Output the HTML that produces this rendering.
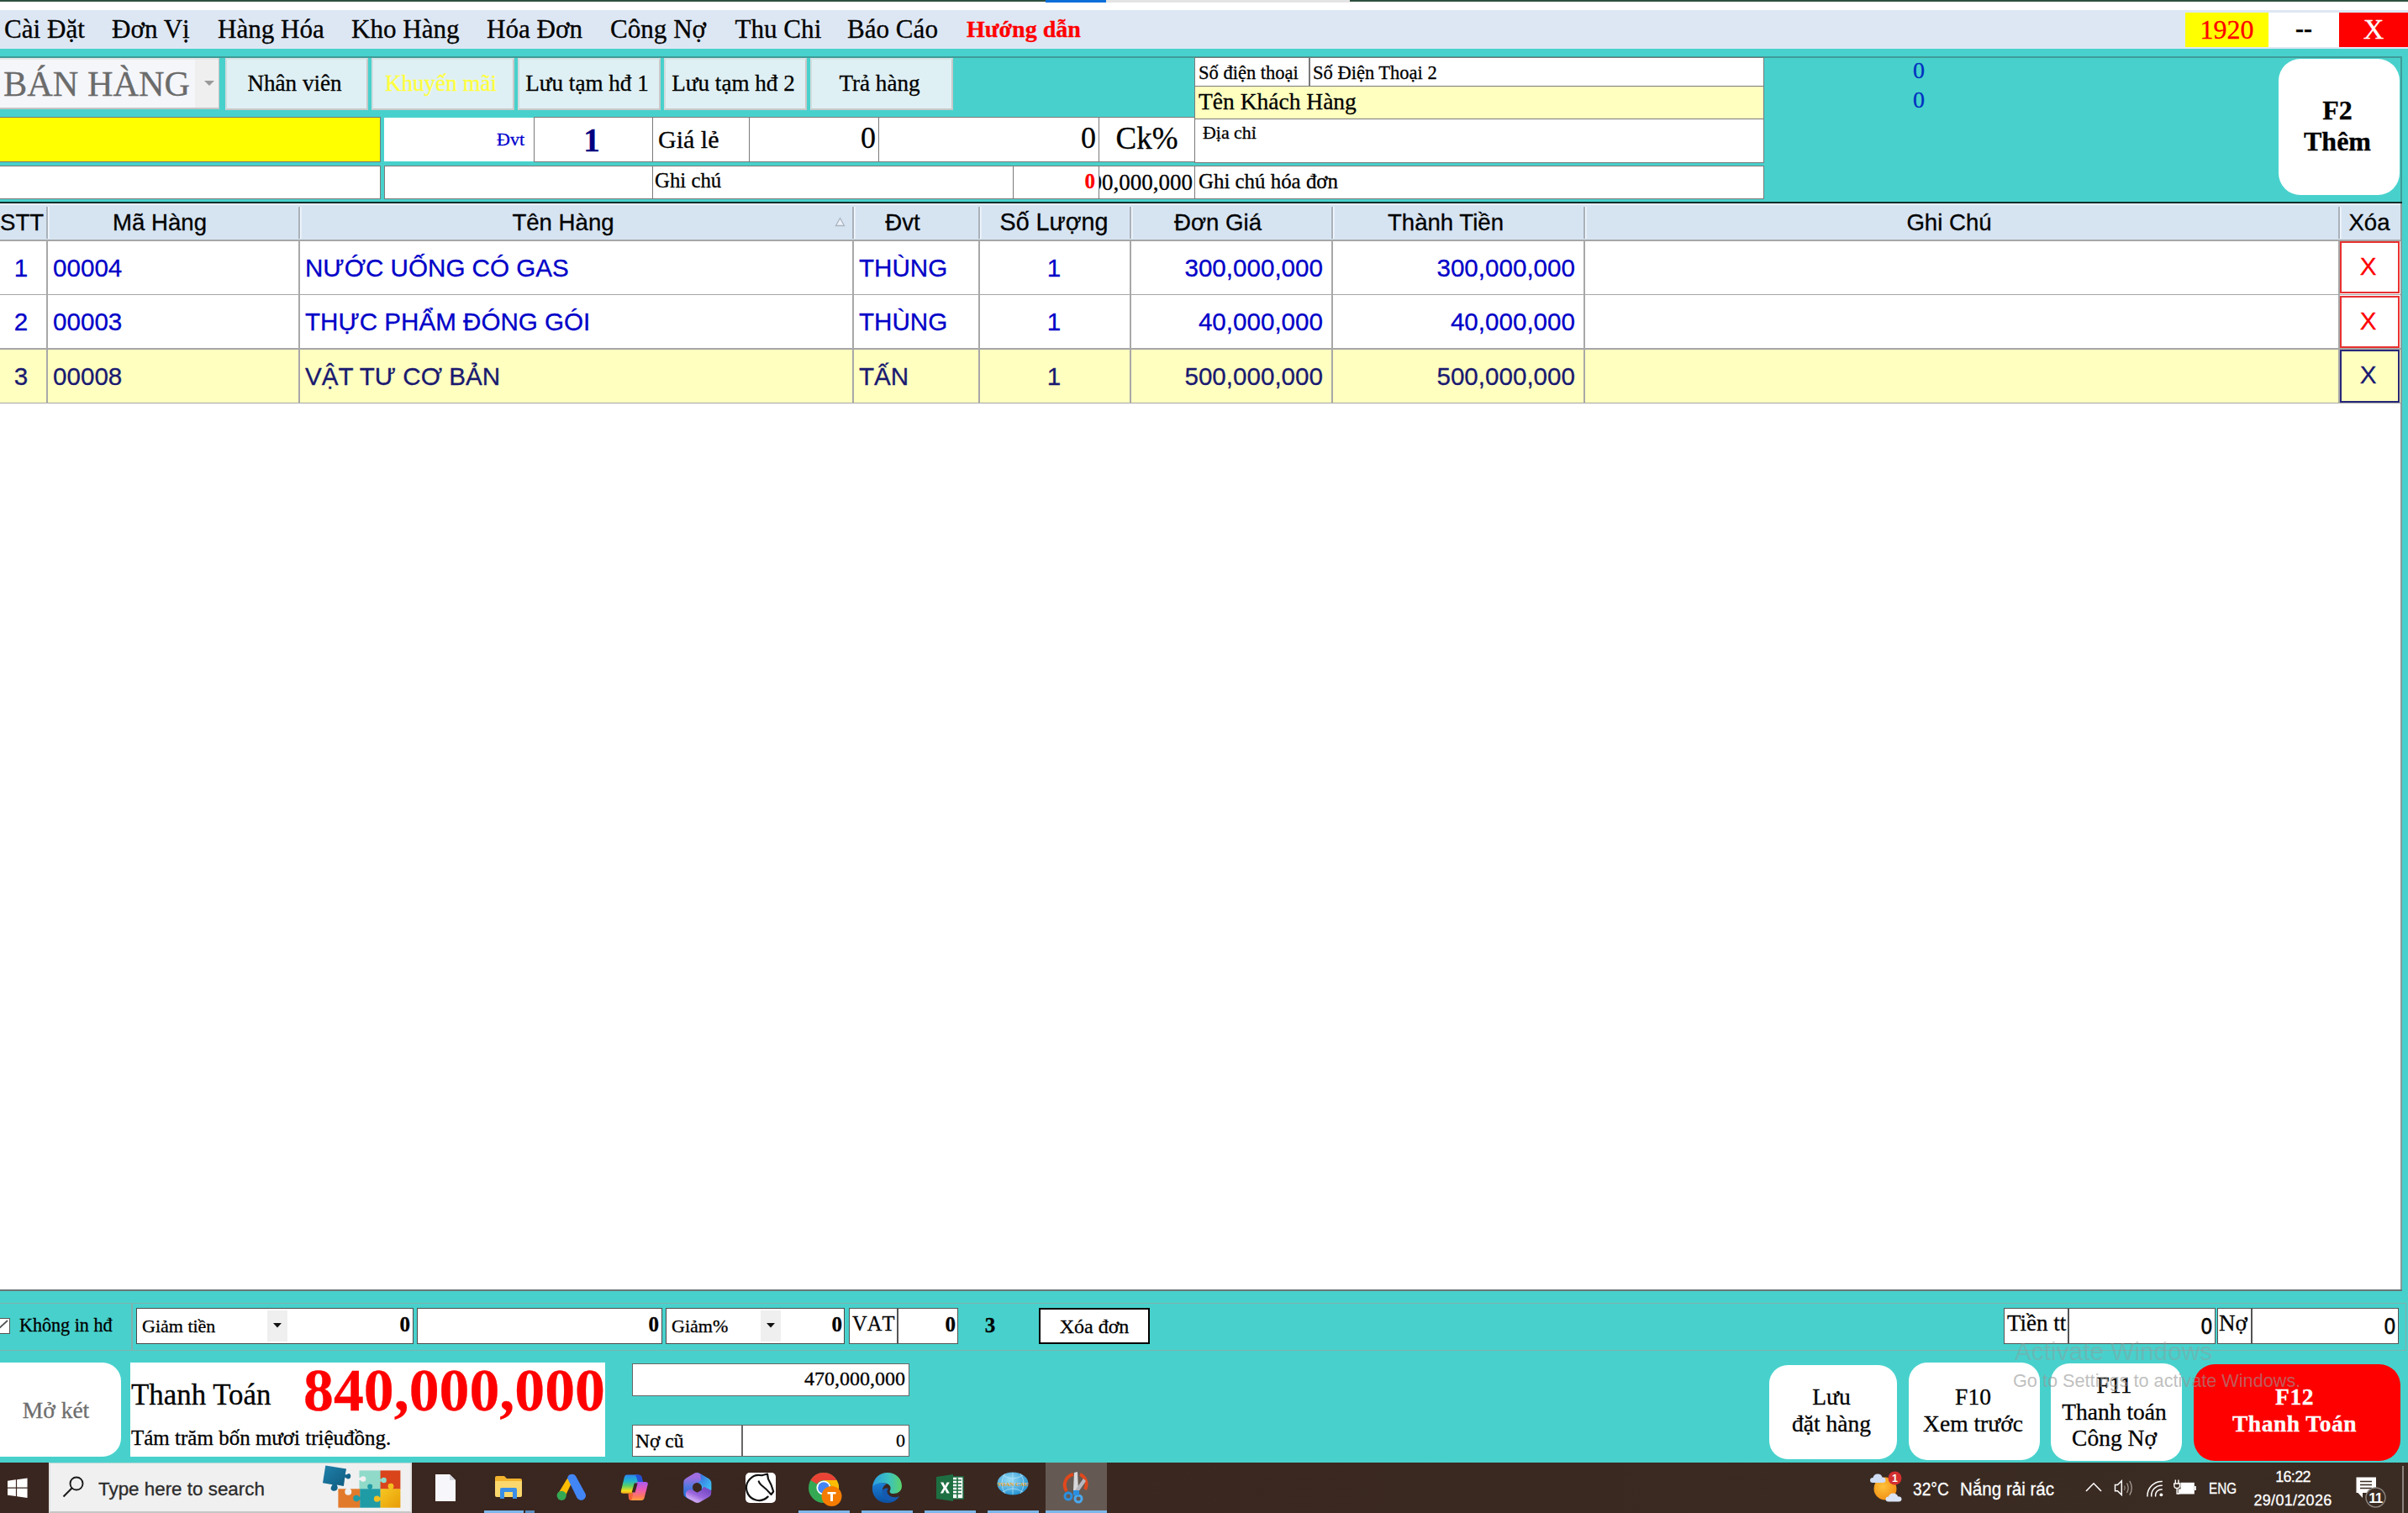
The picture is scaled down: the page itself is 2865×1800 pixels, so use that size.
<!DOCTYPE html>
<html>
<head>
<meta charset="utf-8">
<title>Ban Hang</title>
<style>
*{margin:0;padding:0;box-sizing:border-box}
html,body{width:2865px;height:1800px;overflow:hidden;background:#fff}
body{position:relative;font-family:"Liberation Serif",serif;color:#000;-webkit-text-stroke:.3px currentColor}
.a{position:absolute;white-space:nowrap}
.sans{font-family:"Liberation Sans",sans-serif}
.serif{font-family:"Liberation Serif",serif}
.teal{background:#48d1cc}
.box{background:#fff;border:1.5px solid #7a7a7a}
.r{text-align:right}
.c{text-align:center}
.b{font-weight:bold}
/* menu */
.mi{top:12px;height:46px;line-height:46px;font-size:31.1px}
/* top buttons */
.tb{top:69px;height:62px;background:#dff0f4;border:2px solid #c9c9c9;border-top-color:#d8e4e6;border-left-color:#d0dcde;font-size:27.1px;line-height:56px;text-align:center;padding-right:5px}
/* table */
.th{top:244px;height:41px;line-height:41px;font-size:27.6px;text-align:center;font-family:"Liberation Sans",sans-serif;color:#000}
.vl{width:1.5px;background:#a8a8a8}
.hl{height:1.5px;background:#a6a6a6;left:0;width:2856px}
.td{font-family:"Liberation Sans",sans-serif;font-size:29.6px;height:63px;line-height:64px;color:#0000c8}
.r1{top:287px}.r2{top:351px}.r3{top:416px;color:#191970}
/* bottom */
.rb{background:#fff;border-radius:22px;text-align:center;font-size:30px;line-height:36px}
</style>
</head>
<body>
<!-- ===== top chrome strip ===== -->
<div class="a" style="left:0;top:0;width:1244px;height:1.5px;background:#2f4f3f"></div>
<div class="a" style="left:1244px;top:0;width:72px;height:2.5px;background:#0a6fd8"></div>
<div class="a" style="left:1316px;top:0;width:290px;height:2.5px;background:#e4e4e4"></div>
<div class="a" style="left:1606px;top:0;width:1259px;height:1.5px;background:#2f4f3f"></div>

<!-- ===== menubar ===== -->
<div class="a" id="menubar" style="left:0;top:12px;width:2865px;height:46px;background:#dde7f4"></div>
<div class="a mi" style="left:5px">Cài Đặt</div>
<div class="a mi" style="left:133px">Đơn Vị</div>
<div class="a mi" style="left:259px">Hàng Hóa</div>
<div class="a mi" style="left:418px">Kho Hàng</div>
<div class="a mi" style="left:579px">Hóa Đơn</div>
<div class="a mi" style="left:726px">Công Nợ</div>
<div class="a mi" style="left:874.5px">Thu Chi</div>
<div class="a mi" style="left:1008px">Báo Cáo</div>
<div class="a mi b" style="left:1150px;color:#f00;font-size:28px;line-height:45px">Hướng dẫn</div>
<div class="a c" style="left:2600px;top:15px;width:99px;height:41px;background:#ff0;color:#f00;font-size:32px;line-height:40px">1920</div>
<div class="a c b" style="left:2699px;top:15px;width:84px;height:41px;background:#fff;font-size:30px;line-height:38px">--</div>
<div class="a c" style="left:2783px;top:15px;width:82px;height:41px;background:#f00;color:#fff;font-size:34px;line-height:40px">X</div>

<!-- ===== teal header area ===== -->
<div class="a teal" style="left:0;top:58px;width:2865px;height:184px"></div>
<div class="a" style="left:0;top:67px;width:2858px;height:2px;background:#3f9c98"></div>
<div class="a" style="left:2856px;top:67px;width:2px;height:175px;background:#3f9c98"></div>
<div class="a" style="left:0;top:240px;width:2858px;height:2px;background:#102e2c"></div>

<!-- SECTION:HEADER -->
<!-- combobox BAN HANG -->
<div class="a" style="left:-2px;top:69px;width:263px;height:61px;background:#f5f6fa;border:2px solid #c4c4c4;border-top-color:#e6e6e6"></div>
<div class="a" style="left:232px;top:71px;width:28px;height:57px;background:#efefef"></div>
<div class="a" style="left:4px;top:69px;height:61px;line-height:61px;font-size:42.3px;color:#6b6b6b">BÁN HÀNG</div>
<svg class="a" style="left:243px;top:96px" width="12" height="7" viewBox="0 0 12 7"><path d="M0 0H12L6 6Z" fill="#9a9a9a"/></svg>
<!-- top buttons -->
<div class="a tb" style="left:268px;width:170px">Nhân viên</div>
<div class="a tb" style="left:442px;width:170px;color:#ffff3c">Khuyến mãi</div>
<div class="a tb" style="left:616px;width:170px">Lưu tạm hđ 1</div>
<div class="a tb" style="left:790px;width:170px">Lưu tạm hđ 2</div>
<div class="a tb" style="left:964px;width:170px">Trả hàng</div>
<!-- row 2 -->
<div class="a" style="left:-2px;top:139px;width:455px;height:54px;background:#ff0;border:1.5px solid #777"></div>
<div class="a" style="left:457px;top:139.5px;width:179px;height:52.5px;background:#fff"></div>
<div class="a r" style="left:457px;top:139px;width:167px;height:54px;line-height:53px;font-size:22px;color:#0000cd">Đvt</div>
<div class="a box c b" style="left:635px;top:139px;width:142px;height:54px;font-size:39px;line-height:53px;color:#000080;padding-right:4px">1</div>
<div class="a box" style="left:776px;top:139px;width:116px;height:54px;font-size:30px;line-height:52px;padding-left:6px">Giá lẻ</div>
<div class="a box r" style="left:891px;top:139px;width:155px;height:54px;font-size:36px;line-height:48px;padding-right:3px">0</div>
<div class="a box r" style="left:1045px;top:139px;width:263px;height:54px;font-size:36px;line-height:48px;padding-right:3px">0</div>
<div class="a box c" style="left:1307px;top:139px;width:115px;height:54px;font-size:37px;line-height:50px">Ck%</div>
<!-- row 3 -->
<div class="a box" style="left:-2px;top:197px;width:455px;height:40px"></div>
<div class="a box" style="left:457px;top:197px;width:320px;height:40px"></div>
<div class="a box" style="left:776px;top:197px;width:430px;height:40px;font-size:24.8px;line-height:33px;padding-left:2px">Ghi chú</div>
<div class="a box r b" style="left:1205px;top:197px;width:103px;height:40px;font-size:25px;line-height:36px;color:#f00;padding-right:4px">0</div>
<div class="a box" style="left:1307px;top:197px;width:115px;height:40px;overflow:hidden"><div class="a" style="right:2px;top:0;font-size:27px;line-height:38px">500,000,000</div></div>
<!-- customer boxes -->
<div class="a box" style="left:1421px;top:68px;width:678px;height:36px;font-size:22.5px;line-height:35px;padding-left:4px">Số điện thoại</div>
<div class="a" style="left:1557px;top:69px;width:1.5px;height:34px;background:#7a7a7a"></div>
<div class="a" style="left:1562px;top:68px;font-size:22.5px;line-height:38px">Số Điện Thoại 2</div>
<div class="a box" style="left:1421px;top:102px;width:678px;height:40px;background:#ffffc0;font-size:27.5px;line-height:36px;padding-left:4px">Tên Khách Hàng</div>
<div class="a box" style="left:1421px;top:140.5px;width:678px;height:53px;font-size:21.9px;line-height:32px;padding-left:9px">Địa chỉ</div>
<div class="a box" style="left:1421px;top:197px;width:678px;height:40px;font-size:24.9px;line-height:36px;padding-left:4px">Ghi chú hóa đơn</div>
<!-- blue zeros -->
<div class="a c" style="left:2263px;top:69px;width:40px;font-size:28px;line-height:30px;color:#0030c0">0</div>
<div class="a c" style="left:2263px;top:103.5px;width:40px;font-size:28px;line-height:30px;color:#0030c0">0</div>
<!-- F2 -->
<div class="a rb b" style="left:2711px;top:70px;width:144px;height:162px;border-radius:26px;font-size:32px;line-height:37px;padding-top:43px;padding-right:4px">F2<br>Thêm</div>
<!-- END:HEADER -->

<!-- ===== table ===== -->
<!-- SECTION:TABLE -->
<div class="a" style="left:0;top:242px;width:2856px;height:44px;background:#d6e4f2"></div>
<div class="a" style="left:0;top:242px;width:2856px;height:2px;background:#e9eef4"></div>
<!-- header separators -->
<div class="a vl" style="left:55px;top:246px;height:38px;width:1.5px;background:#a9b1ba;box-shadow:1.5px 0 0 #f4f8fc"></div>
<div class="a vl" style="left:355px;top:246px;height:38px;width:1.5px;background:#a9b1ba;box-shadow:1.5px 0 0 #f4f8fc"></div>
<div class="a vl" style="left:1014px;top:246px;height:38px;width:1.5px;background:#a9b1ba;box-shadow:1.5px 0 0 #f4f8fc"></div>
<div class="a vl" style="left:1164px;top:246px;height:38px;width:1.5px;background:#a9b1ba;box-shadow:1.5px 0 0 #f4f8fc"></div>
<div class="a vl" style="left:1344px;top:246px;height:38px;width:1.5px;background:#a9b1ba;box-shadow:1.5px 0 0 #f4f8fc"></div>
<div class="a vl" style="left:1584px;top:246px;height:38px;width:1.5px;background:#a9b1ba;box-shadow:1.5px 0 0 #f4f8fc"></div>
<div class="a vl" style="left:1884px;top:246px;height:38px;width:1.5px;background:#a9b1ba;box-shadow:1.5px 0 0 #f4f8fc"></div>
<div class="a vl" style="left:2782px;top:246px;height:38px;width:1.5px;background:#a9b1ba;box-shadow:1.5px 0 0 #f4f8fc"></div>
<!-- header labels -->
<div class="a th" style="left:0px">STT</div>
<div class="a th" style="left:90px;width:200px">Mã Hàng</div>
<div class="a th" style="left:570px;width:200px">Tên Hàng</div>
<div class="a th" style="left:974px;width:200px">Đvt</div>
<div class="a th" style="left:1154px;width:200px;font-size:28.7px">Số Lượng</div>
<div class="a th" style="left:1349px;width:200px">Đơn Giá</div>
<div class="a th" style="left:1620px;width:200px">Thành Tiền</div>
<div class="a th" style="left:2219px;width:200px">Ghi Chú</div>
<div class="a th" style="left:2719px;width:200px">Xóa</div>
<svg class="a" style="left:993px;top:257px" width="13" height="13" viewBox="0 0 13 13"><path d="M1.5 11.5L6.5 2.5L11.5 11.5Z" fill="#eef2f8" stroke="#a9b4c2" stroke-width="1.3"/></svg>
<!-- row backgrounds -->
<div class="a" style="left:0;top:416px;width:2856px;height:63px;background:#ffffc0"></div>
<!-- horizontal lines -->
<div class="a hl" style="top:285px"></div>
<div class="a hl" style="top:349.5px"></div>
<div class="a hl" style="top:414px"></div>
<div class="a hl" style="top:478.5px"></div>
<!-- vertical lines body -->
<div class="a vl" style="left:55px;top:286px;height:194px"></div>
<div class="a vl" style="left:355px;top:286px;height:194px"></div>
<div class="a vl" style="left:1014px;top:286px;height:194px"></div>
<div class="a vl" style="left:1164px;top:286px;height:194px"></div>
<div class="a vl" style="left:1344px;top:286px;height:194px"></div>
<div class="a vl" style="left:1584px;top:286px;height:194px"></div>
<div class="a vl" style="left:1884px;top:286px;height:194px"></div>
<div class="a vl" style="left:2782px;top:286px;height:194px"></div>
<!-- row 1 -->
<div class="a td r1 c" style="left:0;width:50px">1</div>
<div class="a td r1" style="left:63px">00004</div>
<div class="a td r1" style="left:363px">NƯỚC UỐNG CÓ GAS</div>
<div class="a td r1" style="left:1022px">THÙNG</div>
<div class="a td r1 c" style="left:1165px;width:178px">1</div>
<div class="a td r1 r" style="left:1345px;width:229px">300,000,000</div>
<div class="a td r1 r" style="left:1585px;width:289px">300,000,000</div>
<div class="a td c" style="left:2784px;top:287px;width:71px;height:62px;border:2px solid #e83030;color:#f00;line-height:56px;background:#fff;padding-right:4px">X</div>
<!-- row 2 -->
<div class="a td r2 c" style="left:0;width:50px">2</div>
<div class="a td r2" style="left:63px">00003</div>
<div class="a td r2" style="left:363px">THỰC PHẨM ĐÓNG GÓI</div>
<div class="a td r2" style="left:1022px">THÙNG</div>
<div class="a td r2 c" style="left:1165px;width:178px">1</div>
<div class="a td r2 r" style="left:1345px;width:229px">40,000,000</div>
<div class="a td r2 r" style="left:1585px;width:289px">40,000,000</div>
<div class="a td c" style="left:2784px;top:352px;width:71px;height:62px;border:2px solid #e83030;color:#f00;line-height:56px;background:#fff;padding-right:4px">X</div>
<!-- row 3 -->
<div class="a td r3 c" style="left:0;width:50px">3</div>
<div class="a td r3" style="left:63px">00008</div>
<div class="a td r3" style="left:363px">VẬT TƯ CƠ BẢN</div>
<div class="a td r3" style="left:1022px">TẤN</div>
<div class="a td r3 c" style="left:1165px;width:178px">1</div>
<div class="a td r3 r" style="left:1345px;width:229px">500,000,000</div>
<div class="a td r3 r" style="left:1585px;width:289px">500,000,000</div>
<div class="a td c" style="left:2784px;top:416px;width:71px;height:63px;border:2px solid #27277a;color:#191970;line-height:56px;background:#ffffc0;padding-right:4px">X</div>
<!-- END:TABLE -->

<!-- ===== bottom teal ===== -->
<div class="a teal" style="left:0;top:1535px;width:2865px;height:205px"></div>
<div class="a teal" style="left:2857px;top:242px;width:8px;height:1300px"></div>
<div class="a" style="left:2856px;top:242px;width:2px;height:1294px;background:#8c9a9a"></div>
<div class="a" style="left:0;top:1534px;width:2858px;height:2px;background:#6b7676"></div>

<!-- SECTION:BOTTOM -->
<!-- option row frame -->
<div class="a" style="left:-2px;top:1550px;width:2865px;height:57px;border:1.5px solid #80b0ae"></div>
<div class="a" style="left:156px;top:1551px;width:1.5px;height:55px;background:#80b0ae"></div>
<!-- checkbox -->
<div class="a" style="left:-8px;top:1568px;width:20px;height:19px;background:#fff;border:1.5px solid #555"></div>
<svg class="a" style="left:-2px;top:1569px" width="13" height="17" viewBox="0 0 13 17"><path d="M0 12L11 2" stroke="#555" stroke-width="1.8" fill="none"/></svg>
<div class="a" style="left:23px;top:1557px;font-size:22.1px;line-height:40px;-webkit-text-stroke:0.3px #000">Không in hđ</div>
<!-- Giam tien -->
<div class="a" style="left:162px;top:1556px;width:330px;height:43px;background:#fff;border:1.5px solid #4a4a4a"></div>
<div class="a" style="left:318px;top:1559px;width:24px;height:37px;background:#efefef"></div>
<div class="a" style="left:169px;top:1557px;font-size:22px;line-height:42px">Giảm tiền</div>
<svg class="a" style="left:325px;top:1574px" width="10" height="6" viewBox="0 0 10 6"><path d="M0 0H10L5 5.5Z" fill="#111"/></svg>
<div class="a r b" style="left:342px;top:1557px;width:146px;font-size:25px;line-height:38px">0</div>
<!-- box 2 -->
<div class="a r b" style="left:496px;top:1556px;width:292px;height:43px;background:#fff;border:1.5px solid #4a4a4a;font-size:25px;line-height:37px;padding-right:3px">0</div>
<!-- Giam % -->
<div class="a" style="left:792px;top:1556px;width:213px;height:43px;background:#fff;border:1.5px solid #4a4a4a"></div>
<div class="a" style="left:905px;top:1559px;width:24px;height:37px;background:#efefef"></div>
<div class="a" style="left:799px;top:1557px;font-size:22px;line-height:42px">Giảm%</div>
<svg class="a" style="left:912px;top:1574px" width="10" height="6" viewBox="0 0 10 6"><path d="M0 0H10L5 5.5Z" fill="#111"/></svg>
<div class="a r b" style="left:929px;top:1557px;width:73px;font-size:25px;line-height:38px">0</div>
<!-- VAT -->
<div class="a" style="left:1010px;top:1556px;width:130px;height:43px;background:#fff;border:1.5px solid #555"></div>
<div class="a" style="left:1067px;top:1557px;width:1.5px;height:41px;background:#555"></div>
<div class="a" style="left:1014px;top:1556px;font-size:24.5px;line-height:37px;font-kerning:none">VAT</div>
<div class="a r b" style="left:1069px;top:1557px;width:68px;font-size:25px;line-height:38px">0</div>
<div class="a c b" style="left:1158px;top:1557px;width:40px;font-size:25px;line-height:40px">3</div>
<!-- Xoa don -->
<div class="a c" style="left:1236px;top:1556px;width:132px;height:43px;background:#fff;border:2px solid #000;font-size:24px;line-height:40px">Xóa đơn</div>
<!-- Tien tt / No -->
<div class="a" style="left:2384px;top:1556px;width:252px;height:43px;background:#fff;border:1.5px solid #555"></div>
<div class="a" style="left:2460px;top:1557px;width:1.5px;height:41px;background:#555"></div>
<div class="a" style="left:2388px;top:1556px;font-size:27px;line-height:36px">Tiền tt</div>
<div class="a sans r b" style="left:2470px;top:1557px;width:162px;font-size:27px;line-height:43px;font-weight:normal;-webkit-text-stroke:.6px #000;transform:scaleX(.88);transform-origin:100% 50%">0</div>
<div class="a" style="left:2638px;top:1556px;width:216px;height:43px;background:#fff;border:1.5px solid #555"></div>
<div class="a" style="left:2678px;top:1557px;width:1.5px;height:41px;background:#555"></div>
<div class="a" style="left:2640px;top:1556px;font-size:27px;line-height:36px">Nợ</div>
<div class="a sans r b" style="left:2690px;top:1557px;width:160px;font-size:27px;line-height:43px;font-weight:normal;-webkit-text-stroke:.6px #000;transform:scaleX(.88);transform-origin:100% 50%">0</div>
<!-- Mo ket -->
<div class="a rb" style="left:-20px;top:1621px;width:164px;height:112px;border-radius:22px"></div>
<div class="a c" style="left:0;top:1621px;width:133px;font-size:27.5px;line-height:114px;color:#6e6e6e">Mở két</div>
<!-- Thanh toan panel -->
<div class="a" style="left:155px;top:1621px;width:565px;height:112px;background:#fff"></div>
<div class="a" style="left:156px;top:1636px;font-size:34.9px;line-height:48px">Thanh Toán</div>
<div class="a b" style="left:361px;top:1612px;font-size:71.8px;line-height:84px;color:#f00">840,000,000</div>
<div class="a" style="left:156px;top:1695px;font-size:25px;line-height:32px">Tám trăm bốn mươi triệuđồng.</div>
<!-- 470,000,000 -->
<div class="a r" style="left:752px;top:1622px;width:330px;height:39px;background:#fff;border:1.5px solid #666;font-size:24px;line-height:35px;padding-right:4px">470,000,000</div>
<div class="a" style="left:752px;top:1695px;width:330px;height:38px;background:#fff;border:1.5px solid #666"></div>
<div class="a" style="left:882px;top:1696px;width:1.5px;height:36px;background:#666"></div>
<div class="a" style="left:756px;top:1695px;font-size:23.5px;line-height:38px">Nợ cũ</div>
<div class="a r" style="left:884px;top:1695px;width:193px;font-size:22px;line-height:38px">0</div>
<!-- big buttons -->
<div class="a rb" style="left:2105px;top:1624px;width:152px;height:112px;font-size:27.5px;line-height:31.5px;padding-top:22px;padding-right:4px">Lưu<br>đặt hàng</div>
<div class="a rb" style="left:2271px;top:1621px;width:156px;height:116px;font-size:27.5px;line-height:31.5px;padding-top:25px;padding-right:3px">F10<br>Xem trước</div>
<div class="a rb" style="left:2440px;top:1622px;width:156px;height:116px;font-size:27.5px;line-height:31.5px;padding-top:10px;padding-right:5px">F11<br>Thanh toán<br>Công Nợ</div>
<div class="a rb b" style="left:2610px;top:1623px;width:246px;height:115px;border-radius:25px;background:#f00;color:#fff;font-size:27.5px;line-height:32px;padding-top:23px;letter-spacing:.5px;padding-right:6px">F12<br>Thanh Toán</div>
<!-- watermark -->
<div class="a sans" style="left:2397px;top:1588px;font-size:29.8px;line-height:40px;color:rgba(150,150,150,.38);-webkit-text-stroke:0">Activate Windows</div>
<div class="a sans" style="left:2395px;top:1626px;font-size:21.7px;line-height:34px;color:rgba(150,150,150,.62);-webkit-text-stroke:0">Go to Settings to activate Windows.</div>
<!-- END:BOTTOM -->

<!-- ===== taskbar ===== -->
<div class="a" id="taskbar" style="left:0;top:1740px;width:2865px;height:60px;background:linear-gradient(90deg,#3a2620 0%,#3a2720 40%,#3a2c23 100%)"></div>
<!-- SECTION:TASKBAR -->
<!-- windows logo -->
<svg class="a" style="left:9px;top:1758px" width="24.5" height="24.5" viewBox="0 0 26 26"><path d="M0 4L10.5 2.5V12.3H0Z M11.8 2.3L25 0.4V12.3H11.8Z M0 13.6H10.5V23.4L0 22Z M11.8 13.6H25V25.5L11.8 23.6Z" fill="#fff"/></svg>
<!-- search box -->
<div class="a" style="left:57.5px;top:1740px;width:432px;height:60px;background:#f0f0f0;border:2px solid #e2e2e2;border-top:1.5px solid #b4d6d6;border-bottom:2px solid #c6c6c6"></div>
<svg class="a" style="left:72px;top:1754px" width="32" height="30" viewBox="0 0 32 30"><circle cx="19" cy="11" r="7.5" fill="none" stroke="#1a1a1a" stroke-width="1.9"/><path d="M13.7 16.3L3.5 26.5" stroke="#1a1a1a" stroke-width="2.1"/></svg>
<div class="a sans" style="left:117px;top:1750px;font-size:22.4px;line-height:44px;color:#2b2b2b">Type here to search</div>
<!-- puzzle -->
<svg class="a" style="left:382px;top:1742px" width="98" height="54" viewBox="0 0 98 54">
<defs><linearGradient id="pz1" x1="0" y1="0" x2="1" y2="1"><stop offset="0" stop-color="#1f82ab"/><stop offset="1" stop-color="#0e5478"/></linearGradient>
<linearGradient id="pz2" x1="0" y1="0" x2="1" y2="1"><stop offset="0" stop-color="#f6c722"/><stop offset="1" stop-color="#e89c06"/></linearGradient></defs>
<path d="M5.300 1.500L30.100 5.600L28.700 12.300q1.600.2 3-.9q3.200-1.400 3.600 2.300q.1 3.800-3.600 3.700q-2-.5-3.300-1.800L26.900 26L18.700 24.600q1.200 2 .9 4.200q-1.200 3.600-5.200 2.900q-3.600-1.200-2.600-4.200q.6-1.600 1.800-3.300L2 22.300Z" fill="url(#pz1)"/>
<rect x="45.500" y="7.400" width="25.500" height="22.300" fill="#90dac9"/>
<rect x="70.600" y="7.400" width="23.800" height="22.300" fill="#d9441b"/>
<rect x="20.400" y="29.300" width="26.200" height="22.400" fill="#e27a2b"/>
<rect x="46.300" y="29.300" width="24.500" height="22.400" fill="#1f9ba6"/>
<rect x="70.600" y="29.300" width="23.800" height="22.400" fill="url(#pz2)"/>
<circle cx="50" cy="17.500" r="3.300" fill="#f0f0f0"/><rect x="45" y="16" width="3" height="3" fill="#f0f0f0"/>
<circle cx="74.600" cy="19" r="3.300" fill="#90dac9"/><rect x="70" y="17.500" width="3" height="3" fill="#90dac9"/>
<circle cx="58.200" cy="26.400" r="3" fill="#1f9ba6"/><rect x="56.800" y="27.500" width="2.800" height="2.500" fill="#1f9ba6"/>
<circle cx="83" cy="26.200" r="3.400" fill="#f4c01f"/><rect x="81.500" y="27.500" width="3" height="2.500" fill="#f4c01f"/>
<circle cx="32.300" cy="32.800" r="4" fill="#f0f0f0"/><rect x="30.500" y="28.800" width="3.600" height="2" fill="#f0f0f0"/>
<circle cx="42" cy="40.600" r="3.800" fill="#1f9ba6"/><rect x="44" y="38.800" width="3" height="3.600" fill="#1f9ba6"/>
<circle cx="66.500" cy="41.200" r="3.600" fill="#f4c01f"/><rect x="68.500" y="39.500" width="3" height="3.400" fill="#f4c01f"/>
</svg>
<!-- blank doc -->
<svg class="a" style="left:517px;top:1753px" width="26" height="34" viewBox="0 0 26 34"><path d="M1 1H18L25 8V33H1Z" fill="#f7f7fb"/><path d="M18 1V8H25Z" fill="#d4d6de"/></svg>
<!-- explorer -->
<svg class="a" style="left:588px;top:1755px" width="34" height="30" viewBox="0 0 34 30"><path d="M1 3q0-2 2-2h9l3 3h16q2 0 2 2v18H1Z" fill="#f2b32e"/><path d="M1 7h32v17q0 2-2 2H3q-2 0-2-2Z" fill="#fbd86d"/><path d="M7 28V17q0-2 2-2h16q2 0 2 2v11h-5v-8h-10v8Z" fill="#3a8ee6"/></svg>
<div class="a" style="left:576px;top:1797px;width:47px;height:3px;background:#7db7ea"></div>
<div class="a" style="left:625px;top:1797px;width:11px;height:3px;background:#5d8fc0"></div>
<!-- google ads -->
<svg class="a" style="left:662px;top:1753px" width="36" height="33" viewBox="0 0 36 33"><path d="M12.5 6.5L22 3L10.5 27L2 24Z" fill="#fbbc04"/><path d="M13 5.5a5.6 5.6 0 0 1 10-2.5L34.5 24a5.6 5.6 0 0 1-10 5Z" fill="#4285f4"/><circle cx="6.2" cy="26.3" r="5.6" fill="#34a853"/></svg>
<!-- copilot -->
<svg class="a" style="left:737px;top:1753px" width="36" height="34" viewBox="0 0 36 34">
<defs><linearGradient id="cp1" x1="0" y1="0" x2="0" y2="1"><stop offset="0" stop-color="#2b86f2"/><stop offset=".35" stop-color="#22b8c8"/><stop offset=".6" stop-color="#5fd060"/><stop offset=".85" stop-color="#f4dc1c"/><stop offset="1" stop-color="#f8a41e"/></linearGradient>
<linearGradient id="cp2" x1="0" y1="0" x2="0" y2="1"><stop offset="0" stop-color="#a85cf4"/><stop offset=".45" stop-color="#ee5cb0"/><stop offset=".8" stop-color="#ff7a5a"/><stop offset="1" stop-color="#ffa23e"/></linearGradient></defs>
<path d="M9 1.500H22Q25.500 1.500 24.500 5L19.800 21Q19 23.800 16 23.800H4.500Q1 23.800 2 20.300L5.800 4.500Q6.500 1.500 9 1.500Z" fill="url(#cp1)"/>
<path d="M18.500 1.500H22.500Q26 1.500 26.800 4.800L28.300 10.500H22L20.600 5.500Q19.900 2.800 18.500 1.500Z" fill="#2450d6"/>
<path d="M27 10H31Q34.500 10 33.600 13.500L29.600 29Q28.800 32 26 32H13L18.200 13.500Q19.200 10 22 10Z" fill="url(#cp2)"/>
<path d="M10.500 23.800H16.500L14.300 32H13.500Q11.500 32 11 29.500Z" fill="#f4623a"/>
<path d="M17.800 11.500H21.600L18.600 22.500H14.700Z" fill="#3a2720"/>
</svg>
<!-- m365 -->
<svg class="a" style="left:812px;top:1751px" width="36" height="38" viewBox="0 0 36 38">
<defs><linearGradient id="m1" x1="0" y1="0" x2="0" y2="1"><stop offset="0" stop-color="#a06ee0"/><stop offset=".45" stop-color="#5a78e0"/><stop offset="1" stop-color="#1f6fd8"/></linearGradient>
<linearGradient id="m2" x1="0" y1="0" x2="1" y2="1"><stop offset="0" stop-color="#3a6fe0"/><stop offset="1" stop-color="#3cc8f4"/></linearGradient>
<linearGradient id="m3" x1="0" y1="1" x2="1" y2="0"><stop offset="0" stop-color="#c8a0f0"/><stop offset=".4" stop-color="#9a66dc"/><stop offset="1" stop-color="#7a4ec8"/></linearGradient></defs>
<path d="M17.600 6.800L28.500 13.200V21" fill="none" stroke="url(#m2)" stroke-width="11.500" stroke-linejoin="round" stroke-linecap="round"/>
<path d="M17 6.800L7 12.800V25.500L11.500 28" fill="none" stroke="url(#m1)" stroke-width="11.500" stroke-linejoin="round" stroke-linecap="round"/>
<path d="M28.500 22.500V25L17.600 31.200L9.500 26.800" fill="none" stroke="url(#m3)" stroke-width="11.500" stroke-linejoin="round" stroke-linecap="round"/>
<path d="M21 4L34.200 11.500V22L24 17Z" fill="url(#m2)"/>
<circle cx="17.300" cy="18.300" r="5.300" fill="#3a2720"/>
</svg>
<!-- lichess -->
<svg class="a" style="left:886px;top:1751px" width="38" height="38" viewBox="0 0 38 38"><rect x="1" y="1" width="36" height="36" rx="5" fill="#fff"/><path d="M27.600 29.600A15 15 0 1 1 20.300 4.300L27 2.500L28 8.500Q32 15 34.200 23.500L31.500 27Q26 20.500 19.500 15.500Q17.500 13.800 16.800 11.500" fill="none" stroke="#111" stroke-width="2.200" stroke-linejoin="round" stroke-linecap="round"/></svg>
<!-- chrome -->
<svg class="a" style="left:960px;top:1750px" width="46" height="46" viewBox="0 0 46 46"><circle cx="20" cy="20" r="18" fill="#34a853"/><path d="M20 2A18 18 0 0 1 35.600 11H20A9 9 0 0 0 12.200 15.500L4.400 11A18 18 0 0 1 20 2Z" fill="#ea4335"/><path d="M35.600 11A18 18 0 0 1 20 38L27.800 24.500A9 9 0 0 0 27.800 15.500L20 11Z" fill="#fbbc04"/><circle cx="20" cy="20" r="8.600" fill="#fff"/><circle cx="20" cy="20" r="6.800" fill="#4285f4"/><circle cx="29.500" cy="30" r="12" fill="#f57c00"/><path d="M24.500 25H34.500V27.600H31V36H28V27.600H24.500Z" fill="#fff"/></svg>
<div class="a" style="left:950px;top:1797px;width:61px;height:3px;background:#7db7ea"></div>
<!-- edge -->
<svg class="a" style="left:1036px;top:1751px" width="38" height="38" viewBox="0 0 38 38">
<defs><linearGradient id="e1" x1="0" y1="0" x2="1" y2="0"><stop offset="0" stop-color="#2a9be0"/><stop offset=".55" stop-color="#3cc2c0"/><stop offset="1" stop-color="#5bd36a"/></linearGradient>
<linearGradient id="e2" x1="0" y1="0" x2="0" y2="1"><stop offset="0" stop-color="#1b7fd6"/><stop offset="1" stop-color="#0c4fa0"/></linearGradient></defs>
<path d="M2 18C3 8 10 1 20 1C30 1 37 8 37 17C37 23 32 26 27 26C23 26 22 24 23 22C24 20 24 17 21 15C16 12 8 14 2 18Z" fill="url(#e1)"/>
<path d="M2 18C1 28 8 37 19 37C25 37 29 35 32 32C27 34 20 33 16 28C12 23 14 17 19 14C12 12 5 14 2 18Z" fill="url(#e2)"/>
<path d="M14 22C13 30 20 36 28 34C31 33 33 31 34 29C30 31 24 31 21 27C19 25 19 22 21 20C18 19 15 20 14 22Z" fill="#1559b0"/>
</svg>
<div class="a" style="left:1025px;top:1797px;width:61px;height:3px;background:#7db7ea"></div>
<!-- excel -->
<svg class="a" style="left:1113px;top:1753px" width="34" height="34" viewBox="0 0 34 34"><rect x="17" y="4" width="16" height="26" fill="#fff" stroke="#1d6f42" stroke-width="1.500"/><path d="M20 8h11M20 12h11M20 16h11M20 20h11M20 24h11M26 5v24" stroke="#1d6f42" stroke-width="1.600"/><path d="M1 4L21 1V33L1 30Z" fill="#1d6f42"/><path d="M6 10.500h3.400l2 4.300l2.200-4.300h3.200l-3.700 6.500l3.800 6.500h-3.400l-2.200-4.400l-2.200 4.400H5.800l3.800-6.500Z" fill="#fff"/></svg>
<div class="a" style="left:1100px;top:1797px;width:61px;height:3px;background:#7db7ea"></div>
<!-- globe -->
<svg class="a" style="left:1185px;top:1750px" width="40" height="30" viewBox="0 0 40 30"><defs><radialGradient id="g1" cx=".4" cy=".35" r=".7"><stop offset="0" stop-color="#9adcf5"/><stop offset="1" stop-color="#1f8fd0"/></radialGradient></defs><ellipse cx="20" cy="15" rx="18.500" ry="13.500" fill="url(#g1)"/><path d="M2 15h36M20 2v26M8 5q12 8 24 0M8 25q12-8 24 0M11 3q-8 12 0 24M29 3q8 12 0 24" stroke="#c8ecfa" stroke-width=".8" fill="none" opacity=".8"/><text x="20" y="18" font-family="Liberation Serif" font-weight="bold" font-size="7" fill="#f0a020" text-anchor="middle">TOAN CAU</text></svg>
<div class="a" style="left:1175px;top:1797px;width:61px;height:3px;background:#7db7ea"></div>
<!-- active app (snipping) -->
<div class="a" style="left:1244px;top:1740px;width:73px;height:60px;background:#655a53"></div>
<div class="a" style="left:1244px;top:1797px;width:73px;height:3px;background:#7db7ea"></div>
<svg class="a" style="left:1263px;top:1750px" width="36" height="40" viewBox="0 0 36 40"><path d="M14 4A13 13 0 0 0 6 24" stroke="#e0481c" stroke-width="4" fill="none"/><path d="M22 4A13 13 0 0 1 28 22" stroke="#e0481c" stroke-width="4" fill="none"/><path d="M15 2L19 1L20 24L14 24Z" fill="#d8d8dc"/><path d="M26 9L29 12L20 25L16 23Z" fill="#b8b8be"/><circle cx="8" cy="30" r="4" fill="none" stroke="#2a8fe0" stroke-width="3"/><circle cx="20" cy="33" r="4" fill="none" stroke="#4aa8f0" stroke-width="3"/><path d="M14 23h7v6h-7Z" fill="#2a8fe0"/></svg>
<!-- tray: weather -->
<svg class="a" style="left:2224px;top:1749px" width="42" height="40" viewBox="0 0 42 40"><defs><radialGradient id="sun" cx=".4" cy=".4" r=".7"><stop offset="0" stop-color="#ffc23a"/><stop offset="1" stop-color="#f08a12"/></radialGradient></defs><circle cx="19" cy="22" r="13.5" fill="url(#sun)"/><path d="M4 15q-3 0-3-3q0-3 3.5-3q1-4.5 5.5-4.500q4.5 0 5.5 4q4 0 4 3.300q0 3.200-3.5 3.200Z" fill="#cfdcf2"/><path d="M23 37.5q-3.500 0-3.500-3q0-3 3.500-3q1-4 5.500-4q4.500 0 5.500 3.800q4.500 0 4.500 3.200q0 3-3.500 3Z" fill="#d9e4f6"/><circle cx="30.5" cy="9.5" r="8" fill="#d32f2f"/><text x="30.5" y="14" font-family="Liberation Sans" font-weight="bold" font-size="12.5" fill="#fff" text-anchor="middle">1</text></svg>
<div class="a sans" style="left:2276px;top:1752px;font-size:22px;line-height:40px;color:#fff;transform:scaleX(.87);transform-origin:0 50%">32°C</div>
<div class="a sans" style="left:2332px;top:1752px;font-size:22px;line-height:40px;color:#fff;transform:scaleX(.935);transform-origin:0 50%">Nắng rải rác</div>
<!-- chevron -->
<svg class="a" style="left:2481px;top:1763px" width="20" height="12" viewBox="0 0 20 12"><path d="M1 11L10 1.800L19 11" fill="none" stroke="#fff" stroke-width="1.600"/></svg>
<!-- speaker -->
<svg class="a" style="left:2514px;top:1759px" width="26" height="22" viewBox="0 0 26 22"><path d="M2.5 7.5H5.5L10.300 2.800V19.5L5.5 14.800H2.5Z" fill="none" stroke="#fff" stroke-width="1.5" stroke-linejoin="miter"/><path d="M13.5 8.5q1.600 2.700 0 5.400" fill="none" stroke="#8e857e" stroke-width="1.300"/><path d="M16.5 5.5q3.400 5.700 0 11.400" fill="none" stroke="#a39a94" stroke-width="1.300"/><path d="M19.800 2.800q5 8.400 0 16.800" fill="none" stroke="#a39a94" stroke-width="1.300"/></svg>
<!-- wifi -->
<svg class="a" style="left:2553px;top:1760px" width="22" height="22" viewBox="0 0 22 22"><circle cx="18.400" cy="18.300" r="1.900" fill="#fff"/><path d="M11.800 20.5A7 7 0 0 1 19.800 12" fill="none" stroke="#fff" stroke-width="1.5"/><path d="M6.800 20.5A12 12 0 0 1 19.800 7.200" fill="none" stroke="#fff" stroke-width="1.5"/><path d="M2 20.5A17 17 0 0 1 19.800 2.5" fill="none" stroke="#fff" stroke-width="1.5"/></svg>
<!-- battery -->
<svg class="a" style="left:2585px;top:1759px" width="30" height="22" viewBox="0 0 30 22"><rect x="7.300" y="5.5" width="17.800" height="12.300" fill="#fff" stroke="#fff" stroke-width="1.400"/><rect x="26" y="9" width="1.800" height="5" fill="#fff"/><rect x="1" y="4.5" width="8.5" height="8" fill="#3a2c23"/><path d="M3.300 1.5v4.5M6.900 1.5v4.5M1.800 6h6.700v2.5q0 3-3.350 3q-3.350 0-3.350-3ZM5.100 11.5v6.500h3" fill="none" stroke="#fff" stroke-width="1.400"/></svg>
<div class="a sans" style="left:2627.5px;top:1751px;font-size:18px;line-height:40px;color:#fff;transform:scaleX(.85);transform-origin:0 50%">ENG</div>
<div class="a sans c" style="left:2678px;top:1741px;width:100px;font-size:18px;line-height:32px;color:#fff;letter-spacing:-.7px">16:22</div>
<div class="a sans c" style="left:2668px;top:1768.5px;width:120px;font-size:18px;line-height:32px;color:#fff;letter-spacing:.3px">29/01/2026</div>
<!-- notifications -->
<svg class="a" style="left:2802px;top:1756px" width="40" height="40" viewBox="0 0 40 40"><path d="M1.5 1.5H25V20H9L9 26L3.5 20H1.5Z" fill="#fff"/><path d="M6 6.5h14M6 10.5h14M6 14.5h14" stroke="#3a2c23" stroke-width="1.5"/><circle cx="24.5" cy="25.5" r="11.5" fill="#3a2c23" stroke="#8a827c" stroke-width="1.5"/><text x="24.300" y="31.5" font-family="Liberation Sans" font-weight="bold" font-size="17" fill="#fff" text-anchor="middle" letter-spacing="-1">11</text></svg>
<div class="a" style="left:2858px;top:1744px;width:1.5px;height:56px;background:#8a827c"></div>
<!-- END:TASKBAR -->

</body>
</html>
